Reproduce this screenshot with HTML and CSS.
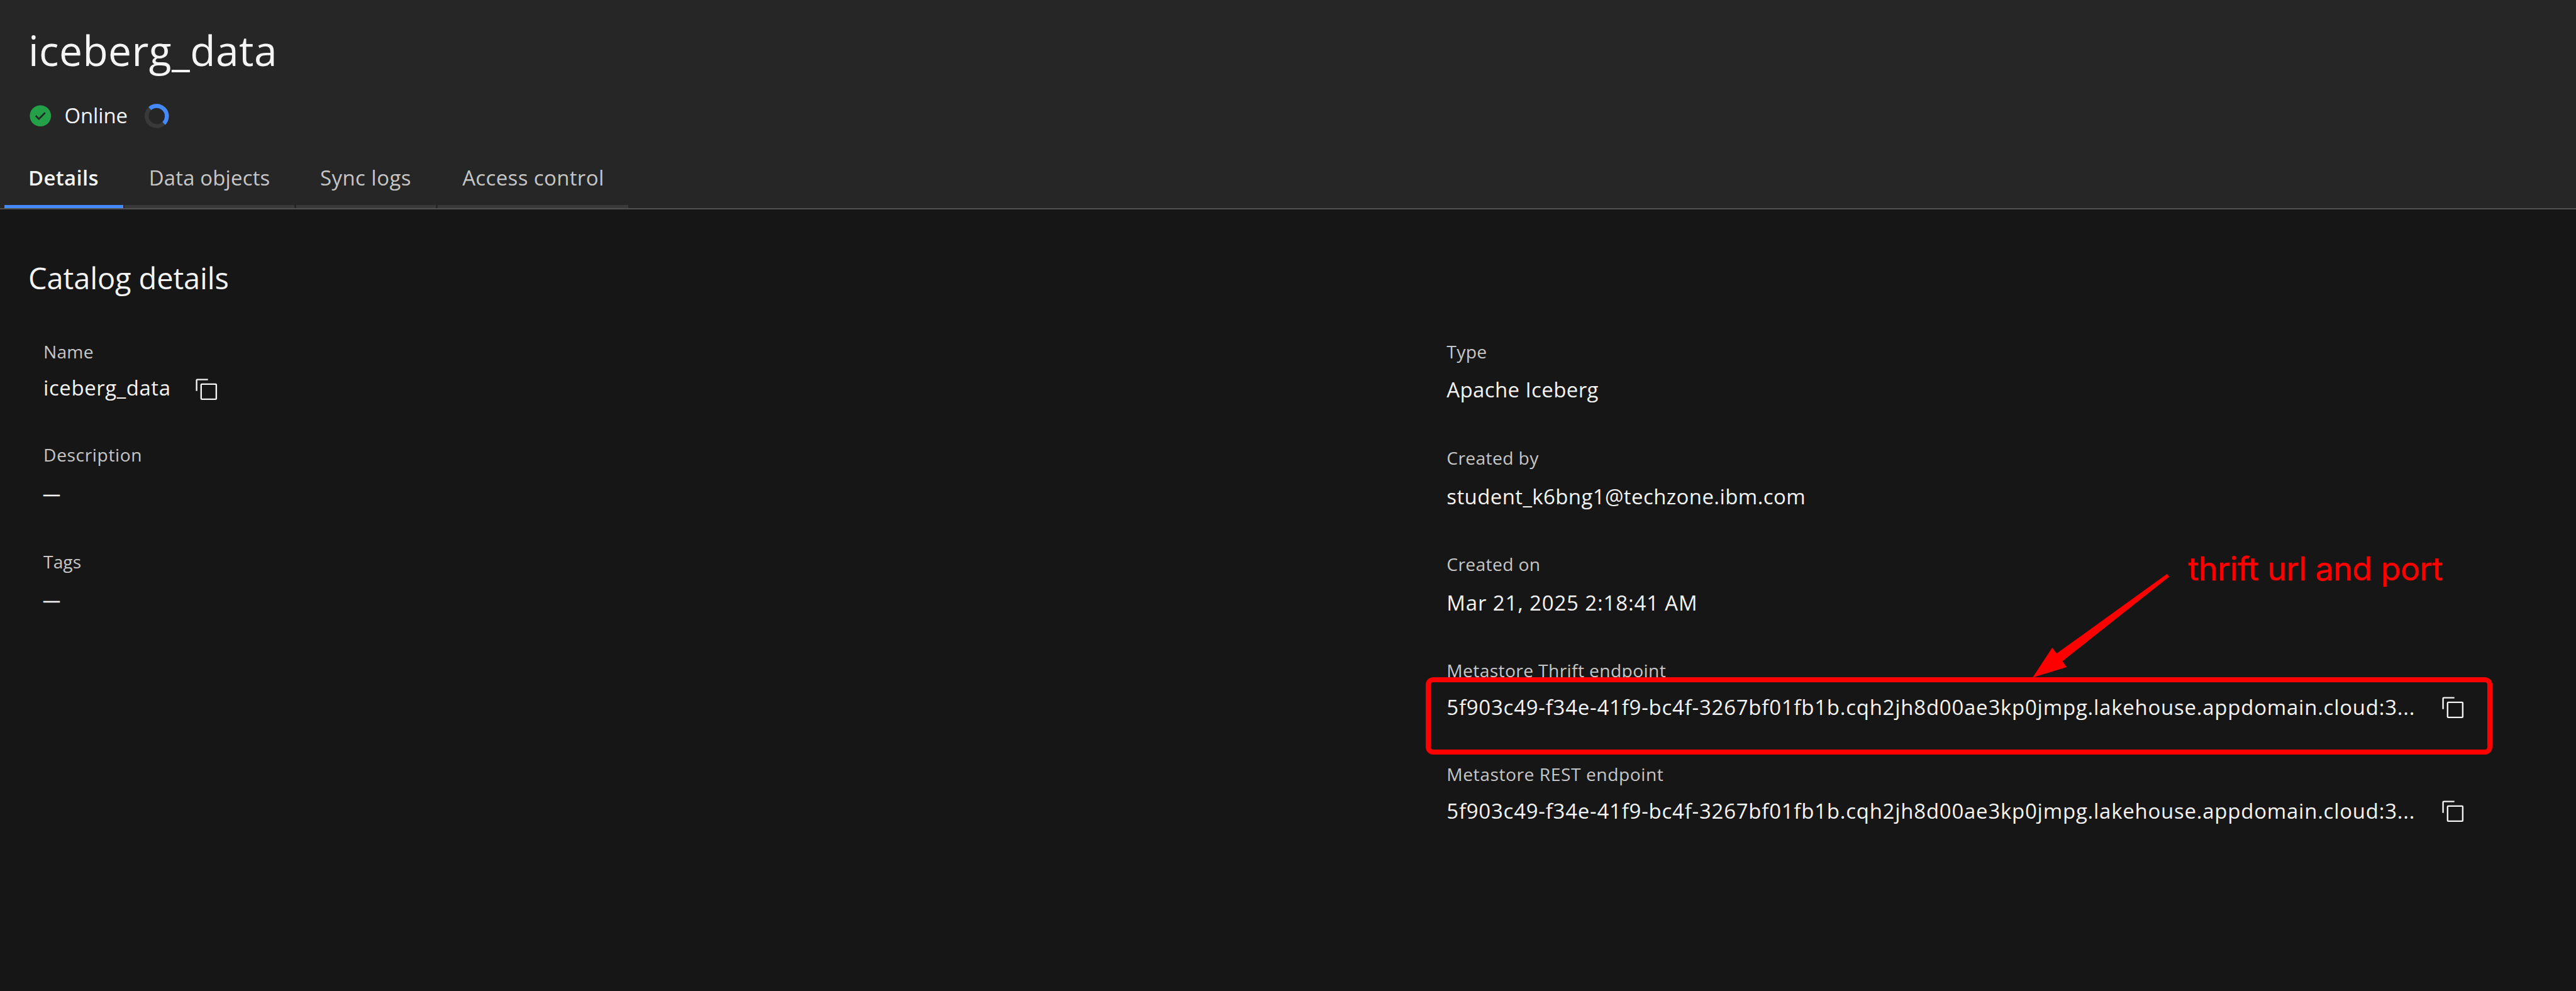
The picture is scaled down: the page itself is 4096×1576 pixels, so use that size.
FILE: index.html
```html
<!DOCTYPE html>
<html lang="en">
<head>
  <meta charset="utf-8">
  <title>iceberg_data</title>
  <link rel="stylesheet" href="styles.css">
</head>
<body>
  <svg class="sprite" aria-hidden="true">
    <symbol id="copy" viewBox="0 0 32 32">
      <path d="M28 10v18H10V10h18m0-2H10a2 2 0 0 0-2 2v18a2 2 0 0 0 2 2h18a2 2 0 0 0 2-2V10a2 2 0 0 0-2-2Z"/>
      <path d="M4 18H2V4a2 2 0 0 1 2-2h14v2H4Z"/>
    </symbol>
  </svg>

  <header class="header">
    <h1 class="title">iceberg_data</h1>
    <div class="status">
      <svg class="status-check" viewBox="0 0 32 32">
        <path fill-rule="evenodd" d="M16 2a14 14 0 1 0 14 14A14 14 0 0 0 16 2Zm-2 19.6-5-5L10.600 15 14 18.400 21.400 11 23 12.600Z"/>
      </svg>
      <span class="status-text">Online</span>
      <svg class="spinner" viewBox="0 0 40 40">
        <circle class="spinner-track" cx="20" cy="20" r="16.700"/>
        <path class="spinner-arc" d="M8.500 7.900A16.700 16.700 0 0 1 31.500 32.100"/>
      </svg>
    </div>
    <nav class="tabs">
      <a class="tab tab-details active">Details</a>
      <a class="tab tab-objects">Data objects</a>
      <a class="tab tab-logs">Sync logs</a>
      <a class="tab tab-access">Access control</a>
    </nav>
  </header>

  <main class="content">
    <h2 class="section-title">Catalog details</h2>
    <div class="columns">
      <dl class="column column-left">
        <div class="field copyable">
          <dt class="label ls-name">Name</dt>
          <dd class="value ls-catalog"><span>iceberg_data</span><svg class="copy"><use href="#copy"/></svg></dd>
        </div>
        <div class="field">
          <dt class="label ls-description">Description</dt>
          <dd class="value dash">—</dd>
        </div>
        <div class="field">
          <dt class="label ls-tags">Tags</dt>
          <dd class="value dash">—</dd>
        </div>
      </dl>
      <dl class="column column-right">
        <div class="field">
          <dt class="label">Type</dt>
          <dd class="value">Apache Iceberg</dd>
        </div>
        <div class="field">
          <dt class="label">Created by</dt>
          <dd class="value">student_k6bng1@techzone.ibm.com</dd>
        </div>
        <div class="field">
          <dt class="label">Created on</dt>
          <dd class="value ls-date">Mar 21, 2025 2:18:41 AM</dd>
        </div>
        <div class="field copyable">
          <dt class="label">Metastore Thrift endpoint</dt>
          <dd class="value ls-endpoint"><span>5f903c49-f34e-41f9-bc4f-3267bf01fb1b.cqh2jh8d00ae3kp0jmpg.lakehouse.appdomain.cloud:3...</span><svg class="copy"><use href="#copy"/></svg></dd>
        </div>
        <div class="field copyable">
          <dt class="label ls-rest">Metastore REST endpoint</dt>
          <dd class="value ls-endpoint"><span>5f903c49-f34e-41f9-bc4f-3267bf01fb1b.cqh2jh8d00ae3kp0jmpg.lakehouse.appdomain.cloud:3...</span><svg class="copy"><use href="#copy"/></svg></dd>
        </div>
      </dl>
    </div>
  </main>

  <div class="callout-box"></div>
  <svg class="callout-arrow" viewBox="0 0 226 172">
    <path d="M0 171.500 31.200 124.100 38.300 133.300 213.700 6.700 217.200 11.200 47.500 145.500 54.200 154.900Z"/>
  </svg>
  <div class="callout-text">thrift url and port</div>
</body>
</html>
```
FILE: styles.css
```css
* {
  box-sizing: border-box;
  margin: 0;
  padding: 0;
}

body {
  position: relative;
  width: 4096px;
  height: 1576px;
  overflow: hidden;
  background: #161616;
  color: #f4f4f4;
  font-family: "Open Sans", "Noto Sans", sans-serif;
  font-size: 32.9px;
  white-space: nowrap;
}

.sprite {
  display: none;
}

/* Header */
.header {
  display: flex;
  flex-direction: column;
  height: 333px;
  padding: 40.3px 0 0 6.6px;
  background: #262626;
  border-bottom: 2px solid #525252;
}

.title {
  padding-left: 38.4px;
  font-size: 65.8px;
  font-weight: 400;
  line-height: 80px;
  letter-spacing: 0.45px;
}

.status {
  display: flex;
  align-items: center;
  height: 40px;
  margin-top: 44.1px;
  padding-left: 38.6px;
}

.status-check {
  width: 38.5px;
  height: 38.5px;
  fill: #24a148;
}

.status-text {
  margin-left: 18.8px;
  padding-bottom: 1.6px;
  line-height: 40px;
  letter-spacing: -0.1px;
}

.spinner {
  width: 38.8px;
  height: 38.8px;
  margin-left: 27px;
  fill: none;
  stroke-width: 6.6;
}

.spinner-track {
  stroke: #393939;
}

.spinner-arc {
  stroke: #4589ff;
}

.tabs {
  display: flex;
  gap: 2.4px;
  margin-top: auto;
}

.tab {
  height: 74px;
  padding-left: 38.4px;
  border-bottom: 5px solid #393939;
  color: #c6c6c6;
  line-height: 51.6px;
}

.tab.active {
  border-bottom-color: #4589ff;
  color: #f4f4f4;
  font-weight: 600;
}

.tab-details {
  width: 189.4px;
  letter-spacing: 0.355px;
}

.tab-objects {
  width: 269.8px;
  letter-spacing: 0.177px;
}

.tab-logs {
  width: 222.8px;
  letter-spacing: 0.486px;
}

.tab-access {
  width: 303.6px;
  padding-left: 39.4px;
  letter-spacing: 0.42px;
}

/* Details */
.content {
  padding-top: 79.4px;
}

.section-title {
  padding-left: 45.1px;
  font-size: 47px;
  font-weight: 400;
  line-height: 60px;
  letter-spacing: -0.125px;
}

.columns {
  display: grid;
  grid-template-columns: 2231.2px 1fr;
  margin-top: 66.2px;
  padding-left: 69.1px;
}

.field {
  height: 169.3px;
}

.field.copyable {
  height: 164.7px;
}

.label {
  color: #c6c6c6;
  font-size: 28.2px;
  line-height: 40px;
  letter-spacing: 0.38px;
}

.value {
  display: flex;
  align-items: center;
  height: 44px;
  margin-top: 19.9px;
  line-height: 44px;
  letter-spacing: 0.44px;
}

.copyable .value {
  margin-top: 16.9px;
}

.dash {
  margin-top: 18.9px;
  margin-left: -1px;
  font-size: 28px;
  -webkit-text-stroke: 0.5px currentColor;
}

.copy {
  width: 38.5px;
  height: 38.5px;
  margin-left: 41px;
  fill: #f4f4f4;
}

.column-left .copy {
  margin-top: 4.4px;
  margin-left: 37.5px;
}

.ls-name {
  letter-spacing: 0.191px;
}

.ls-catalog {
  letter-spacing: 0.6px;
}

.ls-description {
  letter-spacing: 0.603px;
}

.ls-tags {
  letter-spacing: 0.045px;
}

.ls-date {
  letter-spacing: 0.9px;
}

.ls-endpoint {
  letter-spacing: 0.803px;
}

.ls-rest {
  letter-spacing: 0.556px;
}

/* Annotation over the page */
.callout-box {
  position: absolute;
  left: 2267px;
  top: 1077px;
  width: 1695.5px;
  height: 123px;
  border: 8px solid #f00;
  border-radius: 12px;
}

.callout-arrow {
  position: absolute;
  left: 3232.2px;
  top: 905.6px;
  width: 226px;
  height: 172px;
  fill: #f00;
}

.callout-text {
  position: absolute;
  left: 3479.6px;
  top: 869.8px;
  color: #f00;
  font-family: Inter, sans-serif;
  font-size: 52px;
  line-height: 70px;
  letter-spacing: -0.55px;
  -webkit-text-stroke: 0.5px #f00;
}
```
